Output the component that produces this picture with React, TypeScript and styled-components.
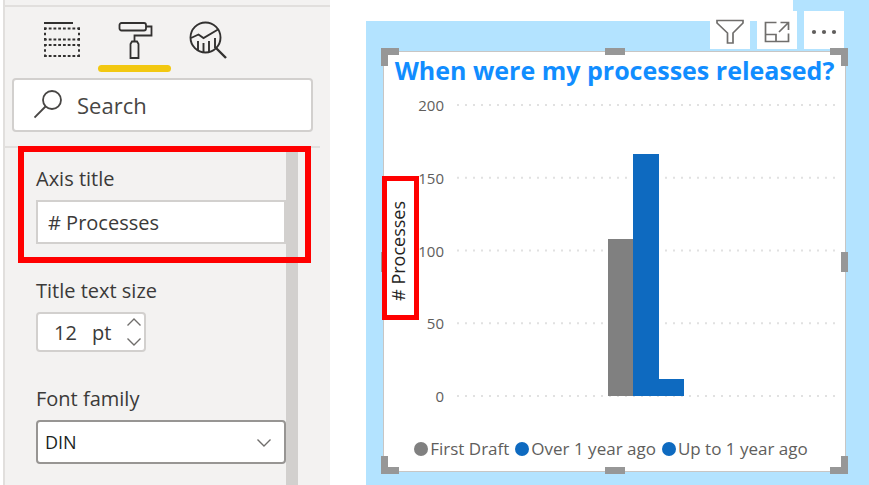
import React from "react";
import styled, { createGlobalStyle, css } from "styled-components";

const GlobalStyle = createGlobalStyle`
  *, *::before, *::after { box-sizing: border-box; }
  body {
    margin: 0;
    background: #ffffff;
    font-family: "Open Sans", "Noto Sans", sans-serif;
    color: #3b3a39;
  }
  button, input, select { font: inherit; color: inherit; }
`;

const Page = styled.main`
  display: flex;
  gap: 36px;
  min-height: 100vh;
  padding-left: 3px;
`;

/* ---------- Format pane ---------- */

const Pane = styled.aside`
  flex: 325 1 0;
  min-width: 0;
  display: flex;
  flex-direction: column;
  padding-top: 5px;
  background: #f3f2f1;
  border-left: 2px solid #e1dfdd;
`;

const PaneHeader = styled.div`
  border-top: 2px solid #e1dfdd;
`;

const TabList = styled.div`
  display: flex;
  padding-left: 20px;
`;

const Tab = styled.button<{ $active?: boolean }>`
  position: relative;
  display: flex;
  justify-content: center;
  align-items: center;
  width: 73px;
  height: 65px;
  padding: 0;
  border: 0;
  background: none;

  ${({ $active }) =>
    $active &&
    css`
      &::after {
        content: "";
        position: absolute;
        left: 0;
        right: 0;
        bottom: 0;
        height: 7px;
        border-radius: 4px;
        background: #f2c811;
      }
    `}
`;

const SearchBox = styled.label`
  display: flex;
  align-items: center;
  gap: 14px;
  height: 54px;
  margin: 6px 17px 14px 7px;
  padding: 0 20px;
  background: #ffffff;
  border: 2px solid #d2d0ce;
  border-radius: 4px;
`;

const SearchInput = styled.input`
  flex: 1;
  min-width: 0;
  padding: 0;
  border: 0;
  outline: 0;
  background: none;
  font-size: 22px;
  line-height: 30px;
  &::placeholder { color: #484644; opacity: 1; }
`;

const PaneBody = styled.div`
  flex: 1;
  display: flex;
  margin-right: 10px;
  padding-right: 22px;
  border-top: 2px solid #e1dfdd;
`;

const Fields = styled.form`
  flex: 1;
  min-width: 0;
  display: flex;
  flex-direction: column;
  gap: 32px;
  padding: 16px 0 16px 31px;
`;

const ScrollTrack = styled.div`
  width: 12px;
  background: #d2d0ce;
`;

const Field = styled.div<{ $highlighted?: boolean }>`
  position: relative;
  display: flex;
  flex-direction: column;
  align-items: flex-start;
  gap: 6px;

  ${({ $highlighted }) =>
    $highlighted &&
    css`
      &::after {
        content: "";
        position: absolute;
        inset: -18px -25px -19px -18px;
        border: 6px solid #ff0000;
        pointer-events: none;
      }
    `}
`;

const FieldLabel = styled.label`
  font-size: 20px;
  line-height: 30px;
`;

const TextInput = styled.input`
  width: 100%;
  height: 44px;
  padding: 0 10px;
  background: #ffffff;
  border: 2px solid #d2d0ce;
  border-radius: 0;
  font-size: 20px;
`;

const Stepper = styled.div`
  display: flex;
  align-items: center;
  height: 40px;
  padding: 0 2px 0 16px;
  background: #ffffff;
  border: 2px solid #d2d0ce;
  border-radius: 4px;
  font-size: 20px;
`;

const StepperInput = styled.input`
  width: 38px;
  padding: 0;
  border: 0;
  outline: 0;
  background: none;
`;

const StepperButtons = styled.div`
  display: flex;
  flex-direction: column;
  gap: 4px;
  margin-left: 15px;
`;

const StepButton = styled.button`
  display: flex;
  justify-content: center;
  align-items: center;
  width: 16px;
  height: 16px;
  padding: 0;
  border: 0;
  background: none;
`;

const SelectWrap = styled.div`
  position: relative;
  width: 100%;
  svg {
    position: absolute;
    right: 14px;
    top: 18px;
    pointer-events: none;
  }
`;

const Select = styled.select`
  display: block;
  appearance: none;
  width: 100%;
  height: 44px;
  padding: 0 7px;
  background: #ffffff;
  border: 2px solid #979593;
  border-radius: 4px;
  font-size: 18px;
  color: #201f1e;
`;

/* ---------- Report canvas ---------- */

const Report = styled.section`
  flex: 503 1 0;
  min-width: 0;
  display: flex;
  flex-direction: column;
  background: #b3e3ff;
`;

const CanvasTop = styled.div`
  height: 21px;
  margin-right: 76px;
  background: #ffffff;
`;

const VisualActions = styled.div`
  display: flex;
  justify-content: flex-end;
  gap: 7px;
  margin: -10px 25px 2px 0;
`;

const ActionButton = styled.button`
  display: flex;
  justify-content: center;
  align-items: center;
  width: 40px;
  height: 38px;
  padding: 4px 0 0;
  border: 0;
  background: #ffffff;
`;

const Visual = styled.article`
  position: relative;
  flex: 1;
  display: flex;
  flex-direction: column;
  margin: 0 23px 13px 17px;
  background: #ffffff;
  border: 1px solid #c8c6c4;
`;

const cornerBase = css`
  width: 18px;
  height: 18px;
  border: 0 solid #979797;
`;

const places = {
  topLeft: css`${cornerBase} top: -4px; left: -3px; border-width: 7px 0 0 7px;`,
  topRight: css`${cornerBase} top: -4px; right: -3px; border-width: 7px 7px 0 0;`,
  bottomLeft: css`${cornerBase} bottom: -3px; left: -3px; border-width: 0 0 7px 7px;`,
  bottomRight: css`${cornerBase} bottom: -3px; right: -3px; border-width: 0 7px 7px 0;`,
  top: css`width: 20px; height: 7px; top: -4px; left: calc(50% - 10px); background: #979797;`,
  bottom: css`width: 20px; height: 7px; bottom: -3px; left: calc(50% - 10px); background: #979797;`,
  left: css`width: 7px; height: 20px; left: -3px; top: calc(50% - 10px); background: #979797;`,
  right: css`width: 7px; height: 20px; right: -3px; top: calc(50% - 10px); background: #979797;`,
};

type Place = keyof typeof places;

const Handle = styled.span<{ $place: Place }>`
  position: absolute;
  ${({ $place }) => places[$place]}
`;

const ChartTitle = styled.h2`
  margin: 0;
  text-align: center;
  white-space: nowrap;
  font-size: 25px;
  line-height: 36px;
  font-weight: 700;
  color: #118dff;
`;

const Chart = styled.div`
  flex: 1;
  display: flex;
  margin: 7px 7px 0 -2px;
`;

const AxisTitle = styled.div`
  position: relative;
  align-self: center;
  display: flex;
  justify-content: center;
  width: 37px;
  padding: 20px 4px 14px 0;
  margin-bottom: 5px;
  border: 5px solid #ff0000;
  background: #ffffff;
  font-size: 18px;
  line-height: 27px;
  font-weight: 500;
  color: #252423;
  span {
    writing-mode: vertical-rl;
    transform: rotate(180deg);
    white-space: nowrap;
  }
`;

const AxisLabels = styled.div`
  display: flex;
  flex-direction: column;
  align-items: flex-end;
  justify-content: space-between;
  width: 25px;
  margin-right: 13px;
  font-size: 15px;
  line-height: 20px;
  color: #605e5c;
`;

const Plot = styled.div`
  flex: 1;
  min-width: 0;
  position: relative;
  margin: 10px 0;
  svg {
    position: absolute;
    width: 100%;
    height: 100%;
    overflow: visible;
  }
`;

const Legend = styled.ul`
  display: flex;
  justify-content: center;
  gap: 6px;
  margin: 31px 7px 10px 0;
  padding: 0;
  list-style: none;
  white-space: nowrap;
  font-size: 17px;
  line-height: 24px;
  color: #605e5c;
`;

const LegendItem = styled.li<{ $color: string }>`
  display: flex;
  align-items: center;
  gap: 2px;
  &::before {
    content: "";
    width: 14px;
    height: 14px;
    border-radius: 50%;
    background: ${({ $color }) => $color};
  }
`;

/* ---------- Icons ---------- */

const FieldsIcon = () => (
  <svg width="38" height="38" viewBox="0 0 38 38" fill="none" stroke="#323130" strokeWidth="2">
    <path d="M1 2H30" />
    <path d="M1 7.5H37M1 18.5H37M1 24H37M1 35H37" strokeDasharray="2.8 1.94" />
    <path d="M2 6.5V19.5M36 6.5V19.5M2 23V36M36 23V36" strokeDasharray="2.6 2.6" />
  </svg>
);

const RollerIcon = () => (
  <svg width="38" height="38" viewBox="0 0 38 38" fill="none" stroke="#323130" strokeWidth="1.8">
    <rect x="3.5" y="2" width="26.5" height="7.5" rx="2" />
    <path d="M30 5.5H35.5V14.5H18.5V20" />
    <path d="M16 20.5H21L22.5 23V37H14.5V23Z" />
  </svg>
);

const AnalyticsIcon = () => (
  <svg width="38" height="38" viewBox="0 0 38 38" fill="none" stroke="#323130" strokeWidth="1.9">
    <circle cx="16.5" cy="16.5" r="15" />
    <path d="M27 27L37 37" strokeWidth="2.4" />
    <path d="M2 17L9.5 13.5L14.5 17L29 8.5" />
    <path d="M9 20V29M14.5 22V31M20 20V31M26 17V27" />
  </svg>
);

const SearchIcon = () => (
  <svg width="29" height="30" viewBox="0 0 29 30" fill="none" stroke="#484644" strokeWidth="1.8">
    <circle cx="18" cy="10" r="9" />
    <path d="M11.5 16.5L0.5 27.5" />
  </svg>
);

const Chevron = ({ up }: { up?: boolean }) => (
  <svg width="16" height="10" viewBox="0 0 16 10" fill="none" stroke="#706e6c" strokeWidth="1.4">
    <path d={up ? "M1.5 8.5L8 2L14.5 8.5" : "M1.5 1.5L8 8L14.5 1.5"} />
  </svg>
);

const FilterIcon = () => (
  <svg width="28" height="26" viewBox="0 0 28 26" fill="none" stroke="#706e6c" strokeWidth="1.7">
    <path d="M1 1.5H27V4L17 14V24H11.5V14L1 4Z" />
  </svg>
);

const FocusIcon = () => (
  <svg width="26" height="22" viewBox="0 0 26 22" fill="none" stroke="#706e6c" strokeWidth="1.7">
    <path d="M12.5 1.5H1.5V20.5H24.5V12.5" />
    <path d="M1.5 13.5H12V20.5" />
    <path d="M15 11L24.5 1.5M16.5 1.5H24.5V9" />
  </svg>
);

const MoreIcon = () => (
  <svg width="26" height="6" viewBox="0 0 26 6" fill="#605e5c">
    <circle cx="3" cy="3" r="2.1" />
    <circle cx="13" cy="3" r="2.1" />
    <circle cx="23" cy="3" r="2.1" />
  </svg>
);

/* ---------- Data ---------- */

const axisMax = 200;
const ticks = [200, 150, 100, 50, 0];
const series = [
  { name: "First Draft", value: 108, color: "#808080" },
  { name: "Over 1 year ago", value: 166, color: "#0e6ac0" },
  { name: "Up to 1 year ago", value: 12, color: "#0e6ac0" },
];
const firstBar = 39.6;
const barWidth = 6.7;

const pct = (n: number) => `${n}%`;

export default function App() {
  return (
    <>
      <GlobalStyle />
      <Page>
        <Pane>
          <PaneHeader>
            <TabList role="tablist">
              <Tab type="button" role="tab" aria-label="Fields"><FieldsIcon /></Tab>
              <Tab type="button" role="tab" aria-label="Format" aria-selected $active><RollerIcon /></Tab>
              <Tab type="button" role="tab" aria-label="Analytics"><AnalyticsIcon /></Tab>
            </TabList>
            <SearchBox>
              <SearchIcon />
              <SearchInput type="text" placeholder="Search" aria-label="Search" />
            </SearchBox>
          </PaneHeader>
          <PaneBody>
            <Fields>
              <Field $highlighted>
                <FieldLabel htmlFor="axis-title">Axis title</FieldLabel>
                <TextInput id="axis-title" type="text" defaultValue="# Processes" />
              </Field>
              <Field>
                <FieldLabel htmlFor="text-size">Title text size</FieldLabel>
                <Stepper>
                  <StepperInput id="text-size" type="text" inputMode="numeric" defaultValue="12" />
                  <span>pt</span>
                  <StepperButtons>
                    <StepButton type="button" aria-label="Increase"><Chevron up /></StepButton>
                    <StepButton type="button" aria-label="Decrease"><Chevron /></StepButton>
                  </StepperButtons>
                </Stepper>
              </Field>
              <Field>
                <FieldLabel htmlFor="font-family">Font family</FieldLabel>
                <SelectWrap>
                  <Select id="font-family" defaultValue="DIN">
                    <option>DIN</option>
                  </Select>
                  <Chevron />
                </SelectWrap>
              </Field>
            </Fields>
            <ScrollTrack />
          </PaneBody>
        </Pane>

        <Report>
          <CanvasTop />
          <VisualActions>
            <ActionButton type="button" aria-label="Filters"><FilterIcon /></ActionButton>
            <ActionButton type="button" aria-label="Focus mode"><FocusIcon /></ActionButton>
            <ActionButton type="button" aria-label="More options"><MoreIcon /></ActionButton>
          </VisualActions>
          <Visual>
            {(Object.keys(places) as Place[]).map((place) => (
              <Handle key={place} $place={place} />
            ))}
            <ChartTitle>When were my processes released?</ChartTitle>
            <Chart>
              <AxisTitle><span># Processes</span></AxisTitle>
              <AxisLabels>
                {ticks.map((t) => <span key={t}>{t}</span>)}
              </AxisLabels>
              <Plot>
                <svg role="img" aria-label="Processes by release age">
                  {ticks.map((t) => (
                    <line
                      key={t}
                      x1="0"
                      x2="100%"
                      y1={pct(100 - (t / axisMax) * 100)}
                      y2={pct(100 - (t / axisMax) * 100)}
                      stroke="#e1e1e1"
                      strokeWidth="2"
                      strokeDasharray="2 6"
                    />
                  ))}
                  {series.map((s, i) => (
                    <rect
                      key={s.name}
                      x={pct(firstBar + i * barWidth)}
                      y={pct(100 - (s.value / axisMax) * 100)}
                      width={pct(barWidth)}
                      height={pct((s.value / axisMax) * 100)}
                      fill={s.color}
                      shapeRendering="crispEdges"
                    />
                  ))}
                </svg>
              </Plot>
            </Chart>
            <Legend>
              {series.map((s) => (
                <LegendItem key={s.name} $color={s.color}>{s.name}</LegendItem>
              ))}
            </Legend>
          </Visual>
        </Report>
      </Page>
    </>
  );
}
